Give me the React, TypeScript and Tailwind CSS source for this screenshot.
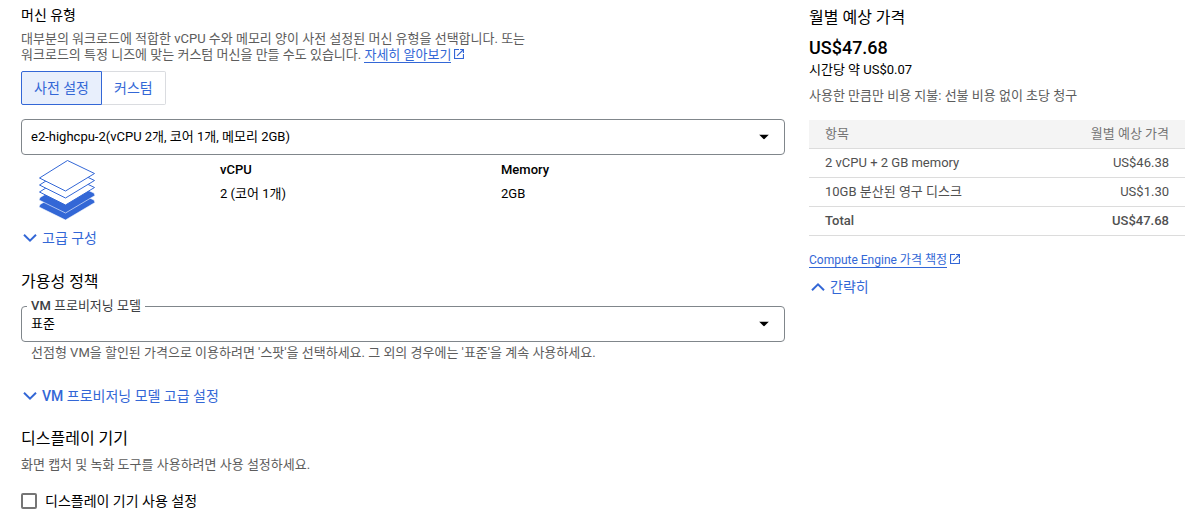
import type { ReactNode } from 'react'

const prices = [
  { item: '2 vCPU + 2 GB memory', price: 'US$46.38' },
  { item: '10GB 분산된 영구 디스크', price: 'US$1.30' },
]

function ExternalIcon() {
  return (
    <svg viewBox="3 3 18 18" className="ml-[3px] inline-block size-[10px] fill-[#3367d6] align-baseline" aria-hidden="true">
      <path d="M19 19H5V5h7V3H3v18h18v-9h-2v7zM14 3v2h3.59l-9.83 9.83 1.41 1.41L19 6.41V10h2V3h-7z" />
    </svg>
  )
}

function Chevron({ up = false }: { up?: boolean }) {
  return (
    <svg viewBox="0 0 14 8" className="h-2 w-[14px] fill-none stroke-[#3367d6] stroke-2" aria-hidden="true">
      <path d={up ? 'M1 7.2 7 1.4l6 5.8' : 'M1 .8l6 5.8L13 .8'} />
    </svg>
  )
}

function Caret() {
  return (
    <svg viewBox="0 0 10 5" className="pointer-events-none absolute top-1/2 right-4 h-[5px] w-[10px] -translate-y-1/2" aria-hidden="true">
      <path d="M0 0h10L5 5z" />
    </svg>
  )
}

function StackIcon() {
  return (
    <svg viewBox="0 0 56 60" className="ml-[18px] h-[60px] w-14" aria-hidden="true">
      <g fill="#3367d6" stroke="#fff" strokeWidth=".6">
        <path d="M28.5 28 55 40l1 2.5L26.5 60 0 47l1-2.5z" />
        <path d="M28.5 21 55 33l1 2.5L26.5 53 0 40l1-2.5z" />
      </g>
      <g fill="#fff" stroke="#3367d6">
        <path d="M28.5 14.5 55.5 27.5 26.5 45 .5 32z" />
        <path d="M28.5 7.5 55.5 20.5 26.5 38 .5 25z" />
        <path d="M28.5.5 55.5 13.5 26.5 31 .5 18z" />
      </g>
    </svg>
  )
}

function ExpandButton({ children, up, className }: { children: ReactNode; up?: boolean; className: string }) {
  return (
    <button type="button" className={`flex items-center gap-[5px] pl-[2px] text-sm leading-5 text-[#3367d6] ${className}`}>
      <Chevron up={up} />
      <span>{children}</span>
    </button>
  )
}

export default function App() {
  return (
    <main className="grid grid-cols-[minmax(0,1fr)_376px] items-start gap-6 bg-white pr-[10px] pl-[21px] font-[Roboto,'Noto_Sans_CJK_KR',sans-serif] text-[13px] text-black">
      <div className="pt-[3px]">
        <h3 className="text-sm leading-6">머신 유형</h3>
        <p className="mt-1 max-w-[520px] leading-4 text-[#5c5c5c]">
          대부분의 워크로드에 적합한 vCPU 수와 메모리 양이 사전 설정된 머신 유형을 선택합니다. 또는
          <br />
          워크로드의 특정 니즈에 맞는 커스텀 머신을 만들 수도 있습니다.{' '}
          <a href="#" className="text-[#3367d6]">
            <span className="border-b border-[#3367d6]">자세히 알아보기</span>
            <ExternalIcon />
          </a>
        </p>

        <div className="mt-2 flex h-[34px] text-sm text-[#3367d6]">
          <button type="button" aria-pressed="true" className="rounded-l-xs border border-[#3367d6] bg-[#e8effc] px-3">
            사전 설정
          </button>
          <button type="button" aria-pressed="false" className="rounded-r-xs border border-l-0 border-[#dadce0] px-3">
            커스텀
          </button>
        </div>

        <div className="relative mt-[14px]">
          <select aria-label="머신 유형" className="h-9 w-full appearance-none rounded border border-[#80868b] bg-white px-[9px]">
            <option>e2-highcpu-2(vCPU 2개, 코어 1개, 메모리 2GB)</option>
          </select>
          <Caret />
        </div>

        <div className="mt-[5px] grid grid-cols-[199px_281px_1fr]">
          <StackIcon />
          <dl className="leading-5">
            <dt className="font-medium">vCPU</dt>
            <dd className="mt-1">2 (코어 1개)</dd>
          </dl>
          <dl className="leading-5">
            <dt className="font-medium">Memory</dt>
            <dd className="mt-1">2GB</dd>
          </dl>
        </div>

        <ExpandButton className="mt-2">고급 구성</ExpandButton>

        <h2 className="mt-[22px] text-base leading-6">가용성 정책</h2>
        <div className="relative mt-3">
          <label htmlFor="model" className="absolute -top-2 left-[6px] bg-white px-1 leading-4 text-[#3c4043]">
            <span className="font-medium">VM</span> 프로비저닝 모델
          </label>
          <select id="model" className="h-9 w-full appearance-none rounded border border-[#80868b] bg-white px-[9px]">
            <option>표준</option>
          </select>
          <Caret />
        </div>
        <p className="mt-[3px] pl-[10px] leading-4 text-[#5c5c5c]">
          선점형 VM을 할인된 가격으로 이용하려면 '스팟'을 선택하세요. 그 외의 경우에는 '표준'을 계속 사용하세요.
        </p>

        <ExpandButton className="mt-[25px]">
          <span className="font-medium">VM</span> 프로비저닝 모델 고급 설정
        </ExpandButton>

        <h2 className="mt-[21px] text-base leading-6">디스플레이 기기</h2>
        <p className="mt-[6px] leading-4 text-[#5c5c5c]">화면 캡처 및 녹화 도구를 사용하려면 사용 설정하세요.</p>
        <label className="mt-[18px] flex items-center gap-2 text-sm leading-5">
          <input type="checkbox" className="size-4 appearance-none rounded-xs border-2 border-[#757575] checked:bg-[#3367d6]" />
          디스플레이 기기 사용 설정
        </label>
      </div>

      <aside className="pt-[6px]">
        <h2 className="text-base leading-6">월별 예상 가격</h2>
        <p className="mt-[6px] text-lg leading-6 font-medium">US$47.68</p>
        <p className="leading-5">시간당 약 US$0.07</p>
        <p className="mt-[6px] leading-5 text-[#5c5c5c]">사용한 만큼만 비용 지불: 선불 비용 없이 초당 청구</p>

        <table className="mt-[14px] w-full text-[#505050]">
          <thead>
            <tr className="h-7 border-b border-[#dcdcdc] bg-[#f4f4f4] text-[#757575]">
              <th className="px-4 text-left font-normal">항목</th>
              <th className="px-4 text-right font-normal">월별 예상 가격</th>
            </tr>
          </thead>
          <tbody>
            {prices.map((row) => (
              <tr key={row.item} className="h-[29px] border-b border-[#dcdcdc]">
                <td className="px-4">{row.item}</td>
                <td className="px-4 text-right">{row.price}</td>
              </tr>
            ))}
          </tbody>
          <tfoot>
            <tr className="h-[29px] border-b border-[#dcdcdc] font-medium">
              <td className="px-4">Total</td>
              <td className="px-4 text-right">US$47.68</td>
            </tr>
          </tfoot>
        </table>

        <p className="mt-[14px] text-xs leading-5">
          <a href="#" className="text-[#3367d6]">
            <span className="border-b border-[#3367d6]">Compute Engine 가격 책정</span>
            <ExternalIcon />
          </a>
        </p>
        <ExpandButton up className="mt-[7px]">간략히</ExpandButton>
      </aside>
    </main>
  )
}
